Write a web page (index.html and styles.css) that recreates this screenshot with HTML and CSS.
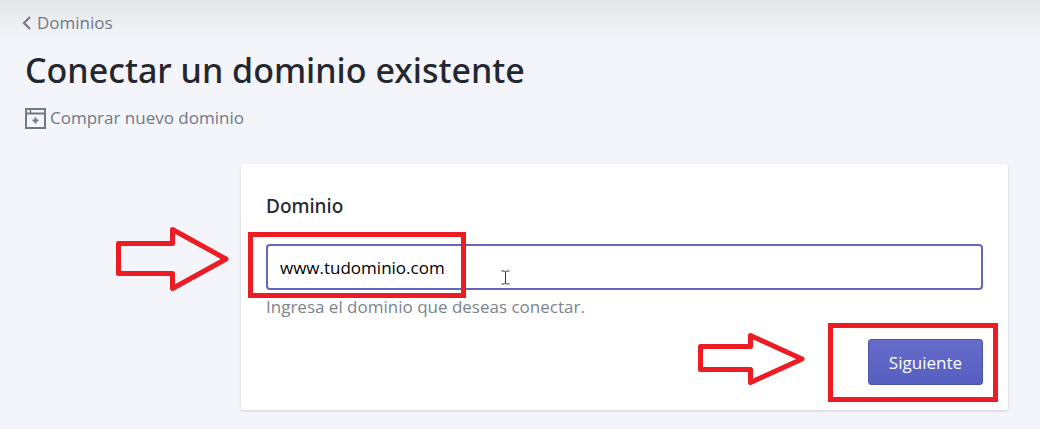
FILE: index.html
```
<!DOCTYPE html>
<html lang="es">
<head>
    <meta charset="UTF-8">
    <meta name="viewport" content="width=device-width, initial-scale=1.0">
    <title>Conectar un dominio existente</title>
    <link rel="stylesheet" href="styles.css">
</head>
<body>
    <header class="page-header">
        <a class="back-link" href="#">
            <svg width="9" height="14" viewBox="0 0 9 14"><path d="M8 1L2 7l6 6" fill="none" stroke="currentColor" stroke-width="2.2"/></svg>
            Dominios
        </a>
        <h1>Conectar un dominio existente</h1>
        <a class="buy-link" href="#">
            <svg width="21" height="21" viewBox="0 0 21 21" fill="none" stroke="currentColor" stroke-width="2">
                <path d="M1 1h19v19H1zM1 5.5h19"/>
                <path d="M5.500 1v4" stroke-width="1.5"/>
                <path d="M10.500 9.500v6M7.500 12.500h6"/>
            </svg>
            Comprar nuevo dominio
        </a>
    </header>
    <main>
        <form class="card">
            <label for="domain">Dominio</label>
            <div class="field">
                <input type="text" id="domain" value="www.tudominio.com">
                <div class="mark"></div>
                <svg class="arrow" width="113" height="66" viewBox="0 0 113 66"><path d="M2.500 17.500H56.500V3.500L110 33 56.500 62.500V47.500H2.500z"/></svg>
                <svg class="cursor" width="9" height="15" viewBox="0 0 9 15"><path d="M.5 1H3.500L4.500 2 5.500 1H8.500M4.500 2V13M.5 14H3.500L4.500 13 5.500 14H8.500"/></svg>
            </div>
            <p class="help">Ingresa el dominio que deseas conectar.</p>
            <div class="actions">
                <button type="button">Siguiente</button>
                <div class="mark"></div>
                <svg class="arrow" width="107" height="52" viewBox="0 0 107 52"><path d="M2.500 13.500H52.500V2.500L104 26 52.500 49.500V36.500H2.500z"/></svg>
            </div>
        </form>
    </main>
</body>
</html>
```
FILE: styles.css
```
body {
    margin: 0;
    min-height: 100vh;
    background: linear-gradient(#e4e5e8, #f4f5fa 40px) no-repeat #f4f5fa;
    font-family: "Open Sans", "Noto Sans", sans-serif;
    font-size: 17px;
    line-height: 24px;
    color: #212b36;
}
a {
    color: #6f7884;
    text-decoration: none;
}
.page-header {
    display: flex;
    flex-direction: column;
    align-items: flex-start;
    padding: 11px 25px 0 22px;
}
.back-link {
    display: flex;
    align-items: center;
    gap: 6px;
}
h1 {
    margin: 12px 0 13px 3px;
    font-family: "Noto Sans", "Open Sans", sans-serif;
    font-size: 34px;
    font-weight: 500;
    line-height: 46px;
    color: #25272f;
}
.buy-link {
    display: flex;
    align-items: center;
    gap: 4px;
    margin-left: 3px;
}
main {
    padding: 34px 32px 18px 241px;
}
.card {
    padding: 30px 25px 25px;
    background-color: #fff;
    border-radius: 3px;
    box-shadow: 0 1px 3px rgba(63, 63, 88, 0.2);
}
label {
    display: block;
    font-family: "Noto Sans", "Open Sans", sans-serif;
    font-size: 19px;
    font-weight: 500;
    color: #25272f;
}
.field {
    position: relative;
    margin-top: 26px;
}
input {
    display: block;
    box-sizing: border-box;
    width: 100%;
    height: 46px;
    padding: 0 12px;
    border: 2px solid #6267bd;
    border-radius: 4px;
    background-color: #fff;
    font-family: inherit;
    font-size: 17px;
    color: #000;
    outline: none;
}
.help {
    margin: 5px 0 20px;
    color: #7b838d;
}
.actions {
    position: relative;
    display: flex;
    justify-content: flex-end;
}
button {
    height: 46px;
    padding: 0 20px;
    border: 1px solid #4e54ac;
    border-radius: 3px;
    background: linear-gradient(#656bc9, #565fc0);
    font-family: inherit;
    font-size: 17px;
    color: #fff;
}

/* red annotations */
.mark {
    position: absolute;
    box-sizing: border-box;
    border: 5px solid #ed1c24;
}
.field .mark {
    top: -12px;
    left: -18px;
    width: 218px;
    height: 66px;
}
.actions .mark {
    top: -16px;
    right: -15px;
    width: 170px;
    height: 79px;
}
.arrow {
    position: absolute;
    fill: none;
    stroke: #ed1c24;
    stroke-width: 5;
    stroke-linejoin: round;
}
.field .arrow {
    top: -18px;
    left: -150px;
}
.actions .arrow {
    top: -6px;
    right: 178px;
}
.cursor {
    position: absolute;
    top: 26px;
    left: 235px;
    fill: none;
    stroke: #333;
}
```
